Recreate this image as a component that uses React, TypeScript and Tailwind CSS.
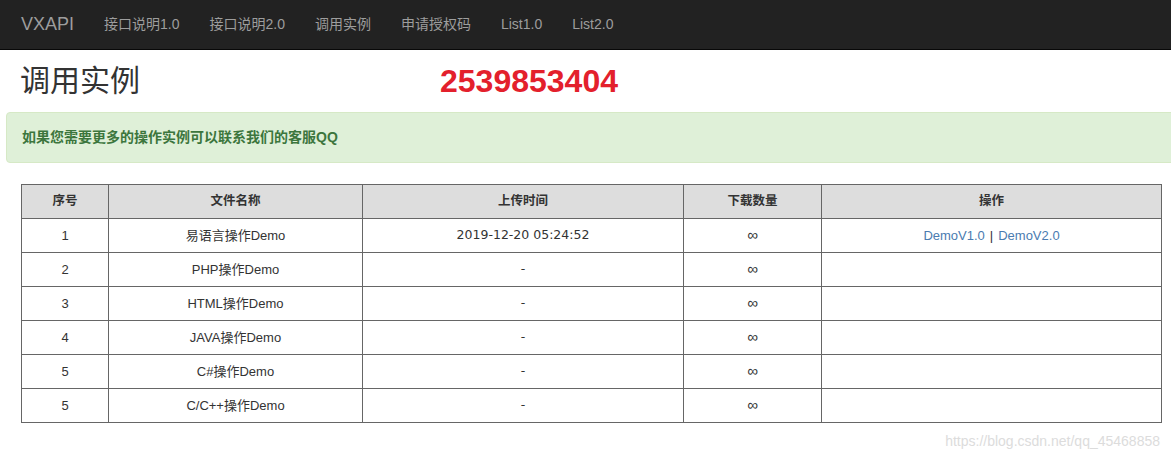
const navItems = ["接口说明1.0", "接口说明2.0", "调用实例", "申请授权码", "List1.0", "List2.0"];

const rows = [
  { id: "1", name: "易语言操作Demo", time: "2019-12-20 05:24:52", links: true },
  { id: "2", name: "PHP操作Demo", time: "-", links: false },
  { id: "3", name: "HTML操作Demo", time: "-", links: false },
  { id: "4", name: "JAVA操作Demo", time: "-", links: false },
  { id: "5", name: "C#操作Demo", time: "-", links: false },
  { id: "5", name: "C/C++操作Demo", time: "-", links: false },
];

const font = { fontFamily: "'Liberation Sans', 'Noto Sans CJK SC', sans-serif" };
const wide = { fontFamily: "'DejaVu Sans', 'Noto Sans CJK SC', sans-serif" };

export default function App() {
  return (
    <div className="relative w-[1171px] h-[460px] overflow-hidden bg-white text-[#333]" style={font}>
      {/* navbar */}
      <nav className="h-[50px] bg-[#222] flex items-center border-b border-[#080808]">
        <span className="pl-[21px] pr-[15px] text-[18px] text-[#9d9d9d]">VXAPI</span>
        <ul className="flex items-center">
          {navItems.map((item) => (
            <li key={item} className="px-[15px] text-[14px] text-[#9d9d9d]">
              {item}
            </li>
          ))}
        </ul>
      </nav>

      {/* heading */}
      <div className="flex items-center h-[62px] pl-[20px]">
        <h1 className="text-[30px] leading-none text-[#333] w-[420px]">调用实例</h1>
        <span className="text-[32px] font-bold leading-none text-[#e3202c]">2539853404</span>
      </div>

      {/* alert */}
      <div className="ml-[6px] w-[1180px] h-[51px] flex items-center pl-[15px] bg-[#dff0d8] border border-[#d6e9c6] rounded-[4px] text-[#3c763d] font-bold text-[14px]">
        如果您需要更多的操作实例可以联系我们的客服QQ
      </div>

      {/* table */}
      <div className="pl-[21px] pt-[21px]">
        <table className="w-[1141px] border-collapse text-center text-[13px]">
          <thead>
            <tr className="h-[34px] bg-[#ddd] text-[12.5px] font-bold">
              <th className="w-[87px] border border-[#666]">序号</th>
              <th className="w-[254px] border border-[#666]">文件名称</th>
              <th className="w-[321px] border border-[#666]">上传时间</th>
              <th className="w-[138px] border border-[#666]">下载数量</th>
              <th className="border border-[#666]">操作</th>
            </tr>
          </thead>
          <tbody>
            {rows.map((r, i) => (
              <tr key={i} className="h-[34px]">
                <td className="border border-[#666]">{r.id}</td>
                <td className="border border-[#666]">{r.name}</td>
                <td className="border border-[#666] text-[12.5px]" style={wide}>{r.time}</td>
                <td className="border border-[#666] text-[15px]">∞</td>
                <td className="border border-[#666]">
                  {r.links && (
                    <span>
                      <a className="text-[#4a7bb0]">DemoV1.0</a>
                      <span className="px-[5px]">|</span>
                      <a className="text-[#4a7bb0]">DemoV2.0</a>
                    </span>
                  )}
                </td>
              </tr>
            ))}
          </tbody>
        </table>
      </div>

      {/* watermark */}
      <span className="absolute right-[11px] top-[431px] text-[14px] text-[#dcdcdc]">
        https://blog.csdn.net/qq_45468858
      </span>
    </div>
  );
}
